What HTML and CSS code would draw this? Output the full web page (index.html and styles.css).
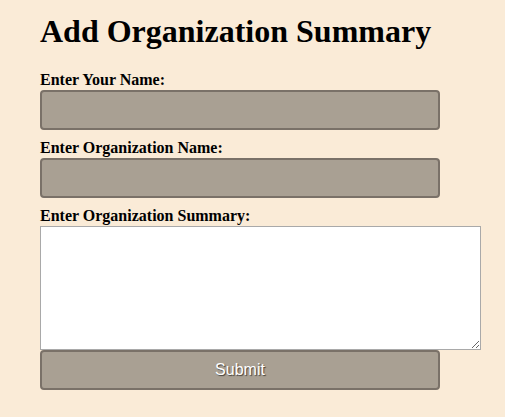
FILE: index.html
```html
<!DOCTYPE html>
<html>
<head>
<meta charset="utf-8">
<link rel="stylesheet" href="styles.css">
</head>
<body>
<div class="page">
  <h1 class="title">Add Organization Summary</h1>
  <form class="form">
    <label class="label" for="name">Enter Your Name:</label>
    <input class="field" id="name" type="text">
    <label class="label" for="org">Enter Organization Name:</label>
    <input class="field" id="org" type="text">
    <label class="label" for="summary">Enter Organization Summary:</label>
    <textarea class="summary" id="summary"></textarea>
    <button class="submit" type="button">Submit</button>
  </form>
</div>
</body>
</html>
```
FILE: styles.css
```css
html, body {
  margin: 0;
  padding: 0;
  background: #faebd7;
}
body {
  font-family: "Liberation Serif", "Times New Roman", serif;
  color: #000;
}
.page {
  padding: 13px 0 0 40px;
}
.title {
  margin: 0 0 20px;
  font-size: 32px;
  line-height: 37px;
  font-weight: bold;
}
.form {
  display: flex;
  flex-direction: column;
  align-items: flex-start;
}
.label {
  display: block;
  font-size: 16px;
  font-weight: bold;
  line-height: 20px;
}
.field {
  box-sizing: border-box;
  width: 400px;
  height: 40px;
  margin: 0 0 8px;
  background: #a9a093;
  border: 2px solid #7a7168;
  border-radius: 4px;
  padding: 0 8px;
}
.summary {
  box-sizing: border-box;
  width: 441px;
  height: 124px;
  margin: 0;
  border: 1px solid #a9a9a9;
  background: #fff;
  display: block;
}
.submit {
  box-sizing: border-box;
  width: 400px;
  height: 40px;
  margin: 0;
  background: #a9a093;
  border: 2px solid #7a7168;
  border-radius: 4px;
  color: #fff;
  font-family: "Liberation Sans", Arial, sans-serif;
  font-size: 16px;
  text-shadow: 1px 1px 1px rgba(0,0,0,0.6);
  cursor: pointer;
}
```
